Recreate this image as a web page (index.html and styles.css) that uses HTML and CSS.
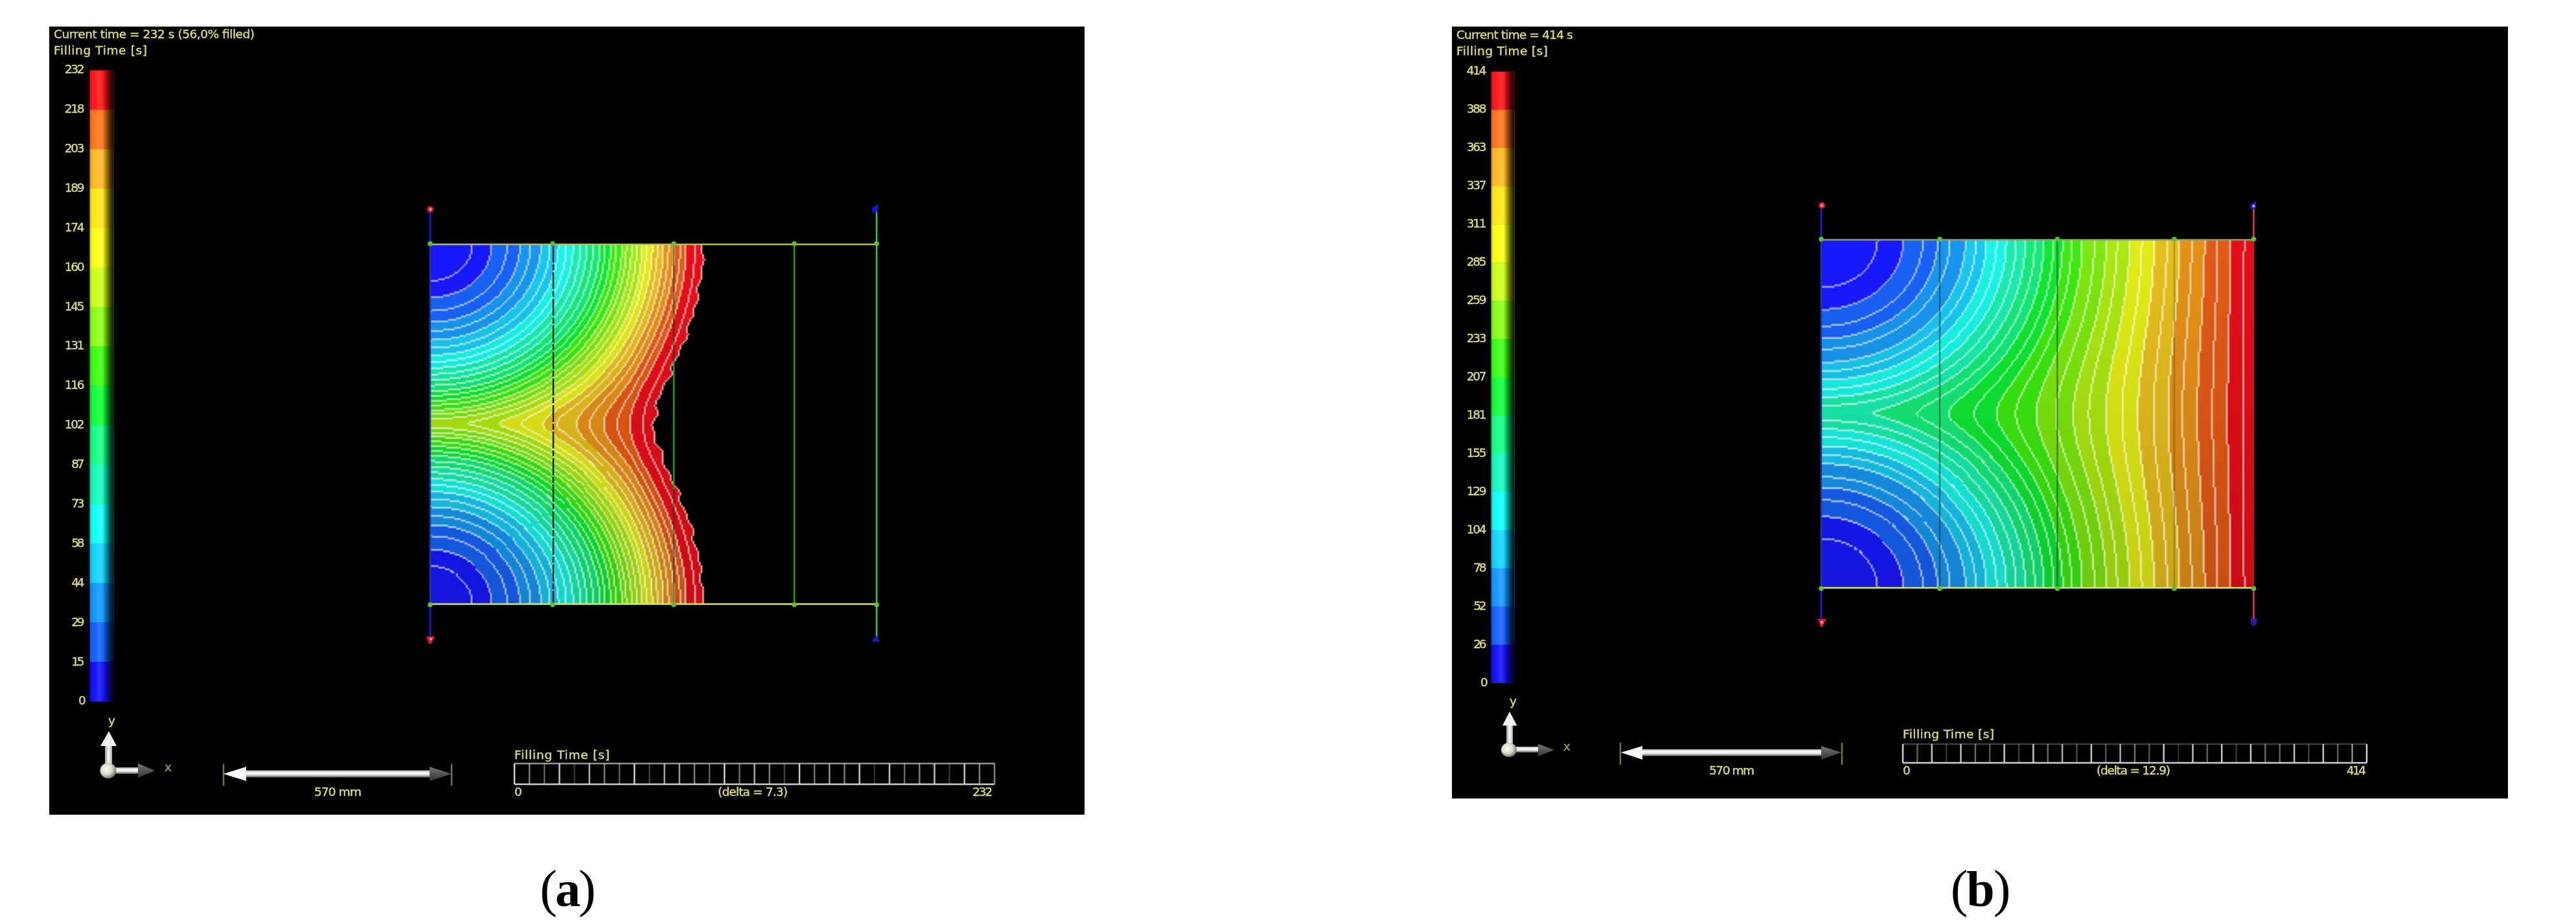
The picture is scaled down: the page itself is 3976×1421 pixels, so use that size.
FILE: index.html
```
<!DOCTYPE html>
<html lang="en">
<head>
<meta charset="utf-8">
<title>Filling time</title>
<link rel="stylesheet" href="styles.css">
</head>
<body>
<main class="figures">
  <figure class="figure figure-a">
    <div class="panel">
      <canvas class="map map-a" id="map-a"></canvas>
      <svg class="overlay" viewBox="76 41 1598 1216" id="overlay-a">
        <defs>
          <linearGradient id="shade" x1="0" x2="1" y1="0" y2="0">
            <stop offset="0" stop-color="#000" stop-opacity=".3"/>
            <stop offset=".08" stop-color="#000" stop-opacity=".03"/>
            <stop offset=".25" stop-color="#fff" stop-opacity=".03"/>
            <stop offset=".4" stop-color="#fff" stop-opacity=".13"/>
            <stop offset=".53" stop-color="#fff" stop-opacity=".04"/>
            <stop offset=".6" stop-color="#000" stop-opacity=".15"/>
            <stop offset=".85" stop-color="#000" stop-opacity=".68"/>
            <stop offset="1" stop-color="#000" stop-opacity=".9"/>
          </linearGradient>
          <linearGradient id="rod" x1="0" x2="0" y1="0" y2="1">
            <stop offset="0" stop-color="#aaa"/>
            <stop offset=".35" stop-color="#fff"/>
            <stop offset=".65" stop-color="#ddd"/>
            <stop offset="1" stop-color="#555"/>
          </linearGradient>
          <linearGradient id="post" x1="0" x2="1" y1="0" y2="0">
            <stop offset="0" stop-color="#999"/>
            <stop offset=".5" stop-color="#fff"/>
            <stop offset="1" stop-color="#aaa"/>
          </linearGradient>
          <linearGradient id="cone" x1="0" x2="0" y1="0" y2="1">
            <stop offset="0" stop-color="#777"/>
            <stop offset="1" stop-color="#333"/>
          </linearGradient>
          <radialGradient id="ball" cx=".4" cy=".4" r=".65">
            <stop offset="0" stop-color="#fffff0"/>
            <stop offset=".55" stop-color="#d8d8c8"/>
            <stop offset="1" stop-color="#66665a"/>
          </radialGradient>
        </defs>
        <text x="83" y="58.500" textLength="310">Current time = 232 s (56,0% filled)</text>
        <text x="83" y="84" textLength="144">Filling Time [s]</text>
        <g class="legend"></g>
        <!-- mesh frame -->
        <g class="soft">
          <path class="blue" d="M664 324V377M664 932V986"/>
          <path class="blue-dim" d="M664 377V932"/>
          <path class="dash" d="M854 379V931"/>
          <path class="seam" d="M1040 379V560"/><path class="seam" d="M1040 750V931"/>
          <path class="green" d="M1040 556V755M1226 377V932"/>
          <path class="green-bright" d="M1353 327V985"/>
          <path class="edge-a" d="M662 377H1355"/><path class="edge-low" d="M662 932H1355"/>
          <g class="nodes"></g>
          <circle class="red-pin" cx="664" cy="323" r="5"/><circle class="pink" cx="664.500" cy="323" r="2"/>
          <path class="red-pin" d="M658 982h13l-5 11h-4z"/><circle class="pink" cx="665" cy="986" r="2"/>
          <path class="blue-pin" d="M1346 321l9-6v12l-8 2z"/><path class="blue-pin" d="M1352 980l6 10h-12z"/>
        </g>
        <!-- axis triad -->
        <g class="soft">
          <rect x="162" y="1150" width="11" height="32" fill="url(#post)"/>
          <path d="M168 1128L180 1151H155Z" fill="#f2f2f2"/>
          <rect x="178" y="1184" width="36" height="10" fill="url(#rod)"/>
          <path d="M213 1178L239 1189L213 1200Z" fill="url(#cone)"/>
          <ellipse cx="167" cy="1189" rx="12.500" ry="12" fill="url(#ball)"/>
        </g>
        <text x="167" y="1118" textLength="11">y</text>
        <text class="dim" x="254" y="1190" textLength="10">x</text>
        <!-- length scale -->
        <g class="soft">
          <path class="tick" d="M345 1179V1212M697 1179V1212"/>
          <rect x="378" y="1188.500" width="287" height="11" fill="url(#rod)"/>
          <path d="M345 1194L380 1183V1205Z" fill="#f6f6f6"/>
          <path d="M697 1194L663 1183V1205Z" fill="url(#cone)"/>
        </g>
        <text x="485" y="1228" textLength="73">570 mm</text>
        <text x="794" y="1171" textLength="147">Filling Time [s]</text>
        <g class="ruler soft"></g>
        <text x="794" y="1228" textLength="12">0</text>
        <text x="1108" y="1228" textLength="108">(delta = 7.3)</text>
        <text x="1501" y="1228" textLength="31">232</text>
      </svg>
    </div>
    <figcaption class="caption"><span class="paren">(</span><b>a</b><span class="paren">)</span></figcaption>
  </figure>

  <figure class="figure figure-b">
    <div class="panel">
      <canvas class="map map-b" id="map-b"></canvas>
      <svg class="overlay" viewBox="2241 41 1630 1191" id="overlay-b">
        <text x="2248" y="60" textLength="180">Current time = 414 s</text>
        <text x="2248" y="85" textLength="141">Filling Time [s]</text>
        <g class="legend"></g>
        <!-- mesh frame -->
        <g class="soft">
          <path class="blue" d="M2811 318V370M2811 907V960"/>
          <path class="blue-dim" d="M2811 370V907"/>
          <path class="seam" d="M2994 371V906M3175.500 371V906"/>
          <path class="seam faint" d="M3356 371V906"/>
          <path class="red" d="M3478.500 320V370M3478.500 907V958"/>
          <path class="edge-b" d="M2810 370H3480"/><path class="edge-low" d="M2810 907H3480"/>
          <g class="nodes"></g>
          <circle class="red-pin" cx="2812" cy="317" r="5"/><circle class="pink" cx="2812" cy="317" r="2"/>
          <path class="red-pin" d="M2806 955h13l-6 12h-3z"/><circle class="pink" cx="2812" cy="960" r="2"/>
          <path class="violet-pin" d="M3473 316l9-6v12l-8 1z"/><circle class="lilac" cx="3478.500" cy="318" r="2"/>
          <path class="violet-pin" d="M3473 955h11l-2 9-6 2z"/>
        </g>
        <!-- axis triad -->
        <g class="soft">
          <rect x="2325" y="1118" width="10" height="32" fill="url(#post)"/>
          <path d="M2330 1098L2341.500 1119.500H2319Z" fill="#f2f2f2"/>
          <rect x="2340" y="1152" width="36" height="9" fill="url(#rod)"/>
          <path d="M2374 1148L2399 1157L2374 1167Z" fill="url(#cone)"/>
          <ellipse cx="2329" cy="1157" rx="12" ry="11" fill="url(#ball)"/>
        </g>
        <text x="2330" y="1088" textLength="10">y</text>
        <text class="dim" x="2413" y="1158" textLength="10">x</text>
        <!-- length scale -->
        <g class="soft">
          <path class="tick" d="M2501 1146V1180M2843 1146V1180"/>
          <rect x="2533" y="1156" width="280" height="10.500" fill="url(#rod)"/>
          <path d="M2502 1161L2535 1151V1172Z" fill="#f6f6f6"/>
          <path d="M2842 1161L2811 1151V1172Z" fill="url(#cone)"/>
        </g>
        <text x="2638" y="1195" textLength="70">570 mm</text>
        <text x="2937" y="1139" textLength="141">Filling Time [s]</text>
        <g class="ruler soft"></g>
        <text x="2937" y="1195" textLength="12">0</text>
        <text x="3236" y="1195" textLength="114">(delta = 12.9)</text>
        <text x="3622" y="1195" textLength="30">414</text>
      </svg>
    </div>
    <figcaption class="caption caption-b"><span class="paren">(</span><b>b</b><span class="paren">)</span></figcaption>
  </figure>
</main>
<script src="plot.js"></script>
</body>
</html>
```
FILE: styles.css
```
body {
  margin: 0;
  background: #fff;
}

.figures {
  display: flex;
  box-sizing: border-box;
  width: 3976px;
  height: 1421px;
  padding: 41px 0 10px 76px;
  overflow: hidden;
}

.figure {
  display: flex;
  flex-direction: column;
  justify-content: space-between;
  margin: 0;
}

.figure-a { width: 1598px; }
.figure-b { width: 1630px; margin-left: 567px; }

.panel {
  display: grid;
  background: #000;
}

.figure-a .panel { height: 1216px; }
.figure-b .panel { height: 1191px; }

.map,
.overlay {
  grid-area: 1 / 1;
}

.map-a {
  width: 690px;
  height: 555px;
  margin: 336px 0 0 588px;
}

.map-b {
  width: 668px;
  height: 537px;
  margin: 329px 0 0 570px;
}

.overlay {
  display: block;
  width: 100%;
  height: 100%;
}

.overlay text {
  font-family: "DejaVu Sans", sans-serif;
  font-size: 18.5px;
  fill: #dcdc78;
  stroke: #dcdc78;
  stroke-width: .4px;
  filter: blur(.7px);
}

.overlay .dim { opacity: .7; }
.overlay path { stroke-width: 2.5; }
.soft { filter: blur(.6px); }

.blue { stroke: #1c1cf0; }
.blue-dim { stroke: #2038a0; }
.red { stroke: #f03a30; }
.green { stroke: #1fa01f; }
.green-bright { stroke: #3cd03c; }
.dash { stroke: #102418; stroke-dasharray: 26 3 9 3; }
.seam { stroke: #0a3010; stroke-opacity: .5; }
.faint { stroke-opacity: .25; }
.edge-a { stroke: #b4bc60; }
.edge-b { stroke: #8ba070; }
.edge-low { stroke: #d8ec58; }
.tick { stroke: #77773a; }

.node { fill: #5cc030; }
.red-pin { fill: #e0182c; }
.blue-pin { fill: #1818d8; }
.violet-pin { fill: #3018b8; }
.pink { fill: #ffa8b8; }
.lilac { fill: #c8b8ff; }

.ruler path { fill: none; stroke: #d0d0d0; }

.caption {
  height: 80px;
  font: 78px/80px "Liberation Serif", serif;
  color: #000;
  text-align: center;
  letter-spacing: -3px;
}

.caption-b { letter-spacing: -2px; }

.paren { font-size: 80px; }
```
FILE: plot.js
```
const SVG = 'http://www.w3.org/2000/svg';

// Sixteen legend bands, lowest time first.
const bands = [
  [20, 16, 255], [20, 98, 255], [20, 152, 255], [20, 212, 255],
  [16, 255, 245], [20, 250, 190], [20, 255, 135], [20, 255, 60],
  [60, 255, 20], [140, 255, 25], [205, 255, 25], [248, 255, 20],
  [255, 232, 25], [255, 186, 35], [255, 118, 28], [255, 22, 26]
];
const mapBands = [
  [24, 24, 255], [24, 98, 246], [24, 150, 240], [24, 200, 240],
  [24, 245, 230], [24, 238, 175], [20, 235, 120], [15, 232, 50],
  [60, 234, 15], [125, 232, 15], [172, 232, 18], [226, 236, 22],
  [230, 190, 28], [228, 145, 24], [226, 90, 22], [230, 14, 24]
];

const plots = [
  {
    id: 'a', w: 690, h: 555, step: 2.5, aspect: .865,
    levels: [0, 66, 96, 120, 140, 156, 172, 186, 199, 211, 222, 233, 243, 253, 263, 271, 280, 288, 297, 304, 312,
      320, 328, 335, 344, 352, 361, 369, 378, 387, 396, 410, 422],
    mid: [[0, 0], [68, 7], [107, 10], [144, 16], [177, 22], [200, 25], [228, 32], [271, 41], [311, 50], [347, 50], [700, 60]],
    front: true,
    legend: { x: 138.5, w: 37, y: 108.5, h: 973.5, right: 130.5, labelY: 106.5, labelStep: 60.88,
      labels: [232, 218, 203, 189, 174, 160, 145, 131, 116, 102, 87, 73, 58, 44, 29, 15, 0] },
    ruler: { x0: 794, x1: 1535, y0: 1178, y1: 1210, top: .7,
      ink: [1, .6, .45, .95, .25, .85, .6, .45, 1, .3, .8, .75, .6, .45, 1, .5, .8, .6, .3, .95, .55, .7, .6, .95, .2, .9, .5, .6, .9, .25, .95, .6, .6] },
    nodes: { xs: [664, 853, 1040, 1226, 1353], ys: [376, 933] }
  },
  {
    id: 'b', w: 668, h: 537, step: 2.547, aspect: .85,
    levels: [0, 88, 128, 158, 181, 200, 224, 240, 256, 272, 287, 302, 316.5, 331, 345, 360, 374, 388, 404, 423, 441,
      458, 477, 496, 515, 535, 554, 573, 593, 613, 633, 654, 720],
    mid: [[0, 0], [77, 9], [148, 18], [194, 27], [237, 35], [273, 43], [338, 56], [389, 61], [441, 65], [491, 68], [537, 69], [579, 69], [624, 70], [668, 71]],
    front: false,
    legend: { x: 2301.5, w: 36, y: 110.5, h: 943, right: 2294.5, labelY: 107.7, labelStep: 59,
      labels: [414, 388, 363, 337, 311, 285, 259, 233, 207, 181, 155, 129, 104, 78, 52, 26, 0] },
    ruler: { x0: 2937, x1: 3653, y0: 1148, y1: 1177, top: .3,
      ink: [1, .45, .9, .25, .9, .5, .4, .95, .3, .95, .5, .8, .35, .95, .4, .8, .55, .4, .95, .2, .9, .45, .95, .25, .95, .5, .45, .9, .3, .95, .45, .7, 1] },
    nodes: { xs: [2811, 2994, 3175.5, 3356, 3478.5], ys: [369, 908] }
  }
];

function make(parent, name, attrs) {
  const el = document.createElementNS(SVG, name);
  for (const key in attrs) el.setAttribute(key, attrs[key]);
  parent.appendChild(el);
  return el;
}

function lookup(table, x) {
  let i = 1;
  while (i < table.length - 1 && table[i][0] < x) i++;
  const [x0, y0] = table[i - 1], [x1, y1] = table[i];
  return y0 + (y1 - y0) * (x - x0) / (x1 - x0);
}

// Contour index at a point: two elliptical fronts that merge on the centre line.
// The distance to the nearer corner is rounded off around the centre line, by
// an amount that gives the lead listed in `mid`.
function contourAt(p, x, y) {
  const half = p.h / 2;
  const near = Math.max(0, Math.min(y, p.h - y));
  const dy = half - near;
  const target = Math.hypot(x, half / p.aspect) - lookup(p.mid, x);
  const midNear = p.aspect * Math.sqrt(Math.max(1, target * target - x * x));
  const w = Math.max(0, (half * half - midNear * midNear) / (2 * midNear));
  const rounded = near - (Math.hypot(dy, w) - dy) + (Math.hypot(half, w) - half);
  const s = Math.hypot(x, rounded / p.aspect);
  const L = p.levels;
  let k = 1;
  while (k < 32 && L[k] < s) k++;
  k = k - 1 + (s - L[k - 1]) / (L[k] - L[k - 1]);
  // The free front is slightly scalloped.
  if (p.front && k > 31) {
    k += Math.min(1, k - 31) * (.16 * Math.sin(y * .21) + .13 * Math.sin(y * .11 + 1));
  }
  return k;
}

function drawMap(p) {
  const canvas = document.getElementById('map-' + p.id);
  const w = canvas.width = Math.round(p.w / p.step);
  const h = canvas.height = Math.round(p.h / p.step);
  const ctx = canvas.getContext('2d');
  const img = ctx.createImageData(w, h);
  const at = (i, j) => contourAt(p, (i + .5) * p.w / w, (j + .5) * p.h / h);
  for (let j = 0; j < h; j++) {
    for (let i = 0; i < w; i++) {
      const k = at(i, j), kx = at(i + 1, j), ky = at(i, j + 1);
      if (k > 32 && p.front) continue;
      const steep = Math.abs(kx - k) >= Math.abs(ky - k) ? kx : ky;
      const line = Math.floor(k) !== Math.floor(steep);
      const c = mapBands[Math.min(15, Math.floor(k / 2))];
      const light = 1 - .13 * j / h;
      const mix = line ? .66 : 0;
      const o = (j * w + i) * 4;
      for (let n = 0; n < 3; n++) img.data[o + n] = c[n] * light * (1 - mix) + 255 * mix;
      img.data[o + 3] = 255;
    }
  }
  ctx.putImageData(img, 0, 0);
}

function drawLegend(root, l) {
  const seg = l.h / 16;
  for (let i = 0; i < 16; i++) {
    make(root, 'rect', { x: l.x, y: l.y + i * seg, width: l.w, height: seg + .5, fill: `rgb(${bands[15 - i]})` });
  }
  make(root, 'rect', { x: l.x, y: l.y, width: l.w, height: l.h + .5, fill: 'url(#shade)' });
  l.labels.forEach((value, i) => {
    const text = String(value);
    const width = text.length * 10.6 - 1;
    const t = make(root, 'text', { x: l.right - width, y: l.labelY + i * l.labelStep + 6.8, textLength: width });
    t.textContent = text;
  });
}

function drawRuler(root, r) {
  make(root, 'path', { d: `M${r.x0} ${r.y0}H${r.x1}`, 'stroke-opacity': r.top });
  make(root, 'path', { d: `M${r.x0} ${r.y1}H${r.x1}` });
  r.ink.forEach((ink, i) => {
    const x = r.x0 + (r.x1 - r.x0) * i / 32;
    make(root, 'path', { d: `M${x} ${r.y0}V${r.y1}`, 'stroke-opacity': ink });
  });
}

for (const p of plots) {
  const overlay = document.getElementById('overlay-' + p.id);
  drawMap(p);
  drawLegend(overlay.querySelector('.legend'), p.legend);
  drawRuler(overlay.querySelector('.ruler'), p.ruler);
  const nodes = overlay.querySelector('.nodes');
  for (const cy of p.nodes.ys) for (const cx of p.nodes.xs) make(nodes, 'circle', { cx, cy, r: 3.8, class: 'node' });
}
```
